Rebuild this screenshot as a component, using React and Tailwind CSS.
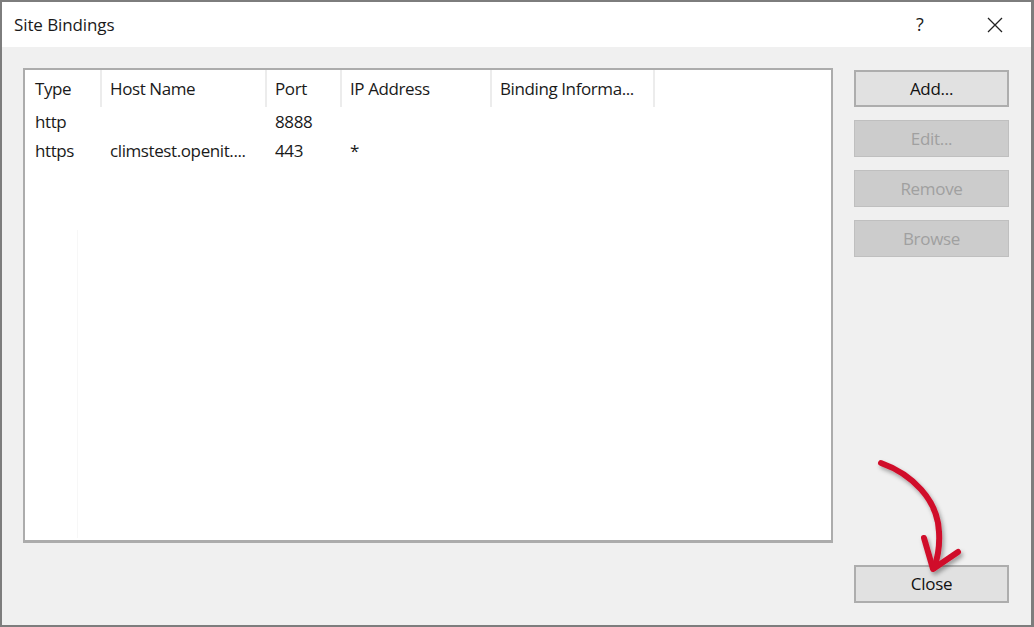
export default function App() {
  const cols = [
    { label: 'Type', w: 'w-[77px]', pad: 'pl-[10px]' },
    { label: 'Host Name', w: 'w-[165px]', pad: 'pl-[8px]' },
    { label: 'Port', w: 'w-[75px]', pad: 'pl-[8px]' },
    { label: 'IP Address', w: 'w-[150px]', pad: 'pl-[8px]' },
    { label: 'Binding Informa...', w: 'w-[163px]', pad: 'pl-[8px]' },
  ]
  const rows = [
    ['http', '', '8888', '', ''],
    ['https', 'climstest.openit....', '443', '*', ''],
  ]

  return (
    <div className="w-[1034px] h-[627px] bg-white font-['Open_Sans',sans-serif] text-[17px] text-[#1a1a1a] leading-normal">
      <div className="relative w-full h-full border-2 border-[#7d7d7d] border-r-[3px] bg-[#f0f0f0] flex flex-col">
        {/* title bar */}
        <div className="h-[45px] bg-white flex items-center pl-[12px] shrink-0">
          <span className="text-[17px] tracking-[-0.1px]">Site Bindings</span>
          <div className="ml-auto flex items-center h-full">
            <span className="text-[18px] w-[20px] text-center mr-[57px]">?</span>
            <svg width="16" height="16" viewBox="0 0 16 16" className="mr-[28px]">
              <path d="M1 1L15 15M15 1L1 15" stroke="#222" strokeWidth="1.3" />
            </svg>
          </div>
        </div>

        {/* body */}
        <div className="flex flex-1 pt-[21px] pl-[21px] pr-[22px] pb-[22px]">
          <div className="w-[810px] h-[475px] bg-white border-2 border-[#acacac] border-b-[3px] relative">
            <div className="flex h-[37px] items-stretch">
              {cols.map((c) => (
                <div key={c.label} className={`${c.w} ${c.pad} shrink-0 border-r-2 border-[#ececec] flex items-center tracking-[-0.4px] whitespace-nowrap`}>
                  {c.label}
                </div>
              ))}
            </div>
            {rows.map((r, i) => (
              <div key={i} className="flex h-[29px] items-center">
                {r.map((v, j) => (
                  <div key={j} className={`${cols[j].w} ${cols[j].pad} shrink-0 whitespace-nowrap tracking-[-0.4px]`}>
                    {v}
                  </div>
                ))}
              </div>
            ))}
            <div className="absolute left-[52px] top-[160px] bottom-[2px] w-px bg-[#f7f7f7]" />
          </div>

          <div className="ml-auto w-[155px] flex flex-col">
            <button className="h-[37px] mt-[2px] bg-[#e1e1e1] border-2 border-[#adadad] text-[#111] tracking-[-0.3px]">Add...</button>
            <button className="h-[37px] mt-[13px] bg-[#cccccc] border border-[#bfbfbf] text-[#a0a0a0] tracking-[-0.3px]">Edit...</button>
            <button className="h-[37px] mt-[13px] bg-[#cccccc] border border-[#bfbfbf] text-[#a0a0a0] tracking-[-0.3px]">Remove</button>
            <button className="h-[37px] mt-[13px] bg-[#cccccc] border border-[#bfbfbf] text-[#a0a0a0] tracking-[-0.3px]">Browse</button>
            <button className="h-[38px] mt-auto bg-[#e1e1e1] border-2 border-[#adadad] text-[#111] tracking-[-0.3px]">Close</button>
          </div>
        </div>

        {/* red annotation arrow */}
        <svg className="absolute left-[860px] top-[450px] pointer-events-none" width="120" height="130" viewBox="0 0 120 130">
          <defs>
            <filter id="sh" x="-20%" y="-20%" width="140%" height="140%">
              <feDropShadow dx="2" dy="3" stdDeviation="2" floodColor="#000" floodOpacity="0.35" />
            </filter>
          </defs>
          <g filter="url(#sh)" fill="none" stroke="#d0112b" strokeLinecap="round" strokeLinejoin="round">
            <path d="M19 11 C50 22 76 48 77 80 C78 96 75 108 72 116" strokeWidth="6" />
            <path d="M62 86 L71 117 L96 100" strokeWidth="6" />
          </g>
        </svg>
      </div>
    </div>
  )
}
